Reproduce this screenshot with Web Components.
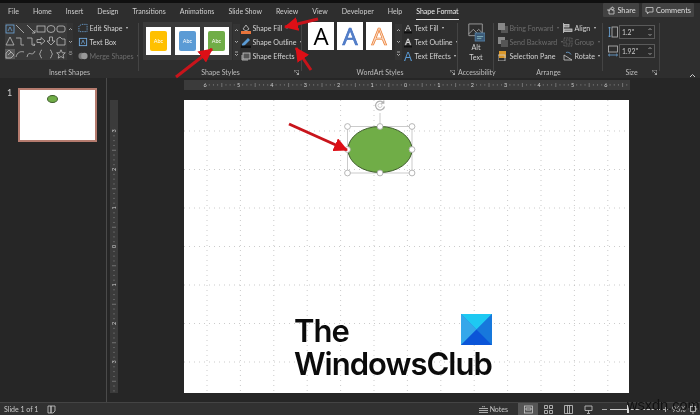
<!DOCTYPE html>
<html><head><meta charset="utf-8"><style>
html,body{margin:0;padding:0;background:#262626;width:700px;height:415px;overflow:hidden;font-family:Lato,"Liberation Sans",sans-serif}
svg{display:block}
</style></head><body>
<pp-app>
  <pp-tabs slot="tabs">
    <pp-tab>File</pp-tab><pp-tab>Home</pp-tab><pp-tab>Insert</pp-tab><pp-tab>Design</pp-tab><pp-tab>Transitions</pp-tab><pp-tab>Animations</pp-tab><pp-tab>Slide Show</pp-tab><pp-tab>Review</pp-tab><pp-tab>View</pp-tab><pp-tab>Developer</pp-tab><pp-tab>Help</pp-tab><pp-tab active>Shape Format</pp-tab>
    <pp-btn slot="right" style="width:36px"><svg width="9" height="9" viewBox="0 0 9 9" fill="none" stroke="#ccc" stroke-width=".8"><path d="M1 4h2v4h5V4H6M3 5c0-2 1-3 3-3V.8L8.3 2.5 6 4.2V3C4.5 3 3.6 3.8 3 5z"/></svg>Share</pp-btn>
    <pp-btn slot="right" style="width:52px"><svg width="9" height="9" viewBox="0 0 9 9" fill="none" stroke="#ccc" stroke-width=".8"><path d="M1 1.5h7v4.5H4L2.5 7.8V6H1z"/></svg>Comments</pp-btn>
  </pp-tabs>
  <pp-ribbon slot="ribbon">
    <rb-group label="Insert Shapes" style="--w:139px;--pl:5px">
      <shape-gallery></shape-gallery>
      <rb-col style="margin-left:5px">
        <rb-cmd><svg slot="i" width="11" height="10" viewBox="0 0 11 10" fill="none" stroke="#6fa8dc" stroke-width=".9" stroke-dasharray="1.5 1"><path d="M1 9V3l3-2h6v8z"/></svg>Edit Shape<rb-caret></rb-caret></rb-cmd>
        <rb-cmd><svg slot="i" width="11" height="10" viewBox="0 0 11 10" fill="none" stroke="#6fa8dc"><rect x="1.5" y="1" width="8" height="8"/><path d="M3.7 7 5.5 3l1.8 4" stroke-width=".8"/></svg>Text Box</rb-cmd>
        <rb-cmd disabled><svg slot="i" width="11" height="10" viewBox="0 0 11 10" fill="#777"><circle cx="4" cy="5" r="3.5"/><circle cx="7" cy="5" r="3.5" fill="#999"/></svg>Merge Shapes<rb-caret></rb-caret></rb-cmd>
      </rb-col>
    </rb-group>
    <rb-group label="Shape Styles" launcher style="--w:163px;--pl:4px">
      <rb-gallery>
        <rb-tile style="margin-right:4px"><style-swatch style="--c:#FFC000"></style-swatch></rb-tile>
        <rb-tile style="margin-right:4px"><style-swatch style="--c:#5B9BD5"></style-swatch></rb-tile>
        <rb-tile><style-swatch style="--c:#70AD47"></style-swatch></rb-tile>
      </rb-gallery>
      <rb-scroll style="margin-left:1px"></rb-scroll>
      <rb-col style="margin-left:1px">
        <rb-cmd><svg slot="i" width="10" height="11" viewBox="0 0 10 11"><path d="M2 6 5 2l3 4-3 2z" fill="none" stroke="#ccc" stroke-width=".8"/><rect x="0" y="8" width="10" height="3" fill="#e8743b"/></svg>Shape Fill<rb-caret></rb-caret></rb-cmd>
        <rb-cmd><svg slot="i" width="10" height="11" viewBox="0 0 10 11"><path d="M1 7 7 1l2 2-6 6H1z" fill="#5b9bd5"/><rect x="0" y="8.5" width="10" height="2.5" fill="#111"/></svg>Shape Outline<rb-caret></rb-caret></rb-cmd>
        <rb-cmd><svg slot="i" width="10" height="11" viewBox="0 0 10 11" fill="none" stroke="#ccc" stroke-width=".8"><rect x="2" y="2" width="7" height="6" fill="#555"/><path d="M1 4v5h6"/></svg>Shape Effects<rb-caret></rb-caret></rb-cmd>
      </rb-col>
    </rb-group>
    <rb-group label="WordArt Styles" launcher style="--w:156px;--pl:6px">
      <rb-tile style="--tw:26px;margin-right:3px"><art-a style="--f:#000;--s:transparent">A</art-a></rb-tile>
      <rb-tile style="--tw:26px;margin-right:3px"><art-a style="--f:#5580c8;--s:#4472C4">A</art-a></rb-tile>
      <rb-tile style="--tw:26px"><art-a style="--f:#f8dcc8;--s:#ED7D31">A</art-a></rb-tile>
      <rb-scroll style="margin-left:3px"></rb-scroll>
      <rb-col style="margin-left:1px">
        <rb-cmd><svg slot="i" width="10" height="11" viewBox="0 0 10 11"><text x="5" y="7.5" font-size="9" text-anchor="middle" fill="#ddd" font-family="Liberation Sans">A</text><rect x="1" y="8.5" width="8" height="2" fill="#111"/></svg>Text Fill<rb-caret></rb-caret></rb-cmd>
        <rb-cmd><svg slot="i" width="10" height="11" viewBox="0 0 10 11"><text x="5" y="7.5" font-size="9" text-anchor="middle" fill="none" stroke="#ddd" stroke-width=".5" font-family="Liberation Sans">A</text><rect x="1" y="8.5" width="8" height="2" fill="#111"/></svg>Text Outline<rb-caret></rb-caret></rb-cmd>
        <rb-cmd><svg slot="i" width="10" height="11" viewBox="0 0 10 11"><text x="5" y="9.5" font-size="12" text-anchor="middle" fill="#5b9bd5" font-family="Liberation Sans">A</text></svg>Text Effects<rb-caret></rb-caret></rb-cmd>
      </rb-col>
    </rb-group>
    <rb-group label="Accessibility" style="--w:36px;--pl:0px">
      <alt-text>Alt<br>Text</alt-text>
    </rb-group>
    <rb-group label="Arrange" style="--w:109px;--pl:4px">
      <rb-col style="width:65px">
        <rb-cmd disabled><svg slot="i" width="10" height="10" viewBox="0 0 10 10"><rect x="3" y="3" width="7" height="7" fill="#555"/><rect width="7" height="7" fill="#888"/></svg>Bring Forward<rb-caret></rb-caret></rb-cmd>
        <rb-cmd disabled><svg slot="i" width="10" height="10" viewBox="0 0 10 10"><rect width="7" height="7" fill="#888"/><rect x="3" y="3" width="7" height="7" fill="#555"/></svg>Send Backward<rb-caret></rb-caret></rb-cmd>
        <rb-cmd><svg slot="i" width="10" height="10" viewBox="0 0 10 10"><rect x="1" y="0" width="7" height="7" fill="#d9972b"/><rect x="0" y="4" width="7" height="6" fill="none" stroke="#ccc" stroke-width=".8"/></svg>Selection Pane</rb-cmd>
      </rb-col>
      <rb-col>
        <rb-cmd><svg slot="i" width="10" height="10" viewBox="0 0 10 10" fill="none" stroke="#ccc" stroke-width=".8"><path d="M.5 0v10"/><rect x="1" y="1.5" width="5" height="2.5" fill="#888"/><rect x="1" y="6" width="8" height="2.5" fill="#888"/></svg>Align<rb-caret></rb-caret></rb-cmd>
        <rb-cmd disabled><svg slot="i" width="10" height="10" viewBox="0 0 10 10" fill="none" stroke="#777" stroke-width=".8" stroke-dasharray="1 .6"><rect x="1" y="1" width="8" height="8"/><rect x="3" y="3" width="4" height="4"/></svg>Group<rb-caret></rb-caret></rb-cmd>
        <rb-cmd><svg slot="i" width="10" height="10" viewBox="0 0 10 10" fill="none" stroke="#ccc" stroke-width=".8"><path d="M1 9h8L1 4z"/><path d="M3 1.5C5 .8 7 1.5 8 3.5" stroke="#6fa8dc"/></svg>Rotate<rb-caret></rb-caret></rb-cmd>
      </rb-col>
    </rb-group>
    <rb-group label="Size" launcher style="--w:57px;--pl:5px">
      <rb-col style="gap:5px;padding-top:4px">
        <size-field value="1.2&quot;"><svg slot="i" width="10" height="12" viewBox="0 0 10 12" fill="none" stroke="#bbb" stroke-width=".8"><rect x="4" y="1" width="5.5" height="10"/><path d="M1.5 1v10" stroke="#6fa8dc"/><path d="M.3 2.3 1.5 1l1.2 1.3M.3 9.7 1.5 11l1.2-1.3" stroke="#6fa8dc"/></svg></size-field>
        <size-field value="1.92&quot;"><svg slot="i" width="10" height="12" viewBox="0 0 10 12" fill="none" stroke="#bbb" stroke-width=".8"><rect x=".5" y="1" width="9" height="6"/><path d="M.5 10h9" stroke="#6fa8dc"/><path d="M1.8 8.8.5 10l1.3 1.2M8.2 8.8 9.5 10l-1.3 1.2" stroke="#6fa8dc"/></svg></size-field>
      </rb-col>
    </rb-group>
    <rb-collapse></rb-collapse>
  </pp-ribbon>
  <pp-thumbs slot="thumbs"></pp-thumbs>
  <pp-work slot="work">
    <pp-hruler slot="hr"></pp-hruler>
    <pp-vruler slot="vr"></pp-vruler>
    <pp-slide slot="slide"></pp-slide>
  </pp-work>
  <pp-status slot="status"></pp-status>
  <red-arrows slot="over"></red-arrows>
</pp-app>
<script>
function el(name,css,html,init){
  customElements.define(name,class extends HTMLElement{
    constructor(){super();this.attachShadow({mode:'open'}).innerHTML='<style>'+css+'</style>'+(typeof html==='function'?html(this):html);}
    connectedCallback(){if(init)init(this);}
  });
}
el('pp-app',`:host{display:block;position:relative;width:700px;height:415px;overflow:hidden;background:#262626;color:#d2d2d2;font:7px Lato,"Liberation Sans",sans-serif;filter:blur(.25px)}
.m{display:grid;grid-template-columns:107px 593px;height:324px}
`,`<slot name="tabs"></slot><slot name="ribbon"></slot><div class="m"><slot name="thumbs"></slot><slot name="work"></slot></div><slot name="status"></slot><slot name="over"></slot>`);
el('pp-tabs',`:host{display:flex;height:20px;box-sizing:border-box;border-top:3px solid #101010;background:#2e2e2e;align-items:center;padding-left:8px}
.l{display:flex;gap:14px;flex:1;height:100%;align-items:center}.r{display:flex;gap:3px;margin-right:6px;margin-top:-3px}`,
`<div class="l"><slot></slot></div><div class="r"><slot name="right"></slot></div>`);
el('pp-tab',`:host{display:block;font-size:7px;line-height:17px;height:17px;color:#cfcfcf;position:relative;white-space:nowrap}
:host([active]){color:#eee}
:host([active])::after{content:"";position:absolute;left:0;right:0;bottom:0;height:1.5px;background:#e8e8e8}`,`<slot></slot>`);
el('pp-btn',`:host{display:flex;align-items:center;justify-content:center;gap:2px;height:14px;background:#424242;font-size:7.4px;color:#ddd;border-radius:1px;white-space:nowrap}`,`<slot></slot>`);
el('pp-ribbon',`:host{display:flex;height:58px;background:#2e2e2e;position:relative}`,`<slot></slot>`);
el('rb-group',`:host{display:flex;flex-direction:column;width:var(--w);height:58px;box-sizing:border-box;position:relative}
.c{display:flex;height:47px;padding-left:var(--pl);align-items:flex-start;padding-top:2px;box-sizing:border-box}
.l{height:11px;line-height:10px;text-align:center;font-size:7px;color:#bdbdbd;white-space:nowrap}
.s{position:absolute;right:0;top:3px;height:48px;width:1px;background:#444}
.k{position:absolute;right:3px;bottom:3px;width:5px;height:5px}`,
h=>`<div class="c"><slot></slot></div><div class="l">${h.getAttribute('label')}</div><div class="s"></div>`+(h.hasAttribute('launcher')?`<svg class="k" viewBox="0 0 5 5" fill="none" stroke="#bbb" stroke-width=".7"><path d="M0 2.5V0h5v5H2.5M1.5 1.5l3 3M3 4.5h1.5V3"/></svg>`:''));
el('rb-col',`:host{display:flex;flex-direction:column;gap:0;margin-top:-1px}`,`<slot></slot>`);
el('rb-cmd',`:host{display:flex;align-items:center;gap:1.5px;height:14px;font-size:7.1px;white-space:nowrap;color:#d2d2d2}
:host([disabled]){color:#6d6d6d}
.i{display:flex;width:10px;justify-content:center}`,`<span class="i"><slot name="i"></slot></span><slot></slot>`);
el('rb-caret',`:host{display:inline-block;margin-left:2px;width:0;height:0;border:1.5px solid transparent;border-top:2px solid currentColor;border-bottom:0}`,``);
el('shape-gallery',`:host{display:flex;width:68px;height:37px;background:#3a3a3a;margin-top:1px}
.g{display:grid;grid-template-columns:repeat(6,10.3px);grid-auto-rows:12.3px;width:62px}
.g svg{width:10px;height:10px;margin:1px 0 0 0;fill:none;stroke:#bdbdbd;stroke-width:.8}
.v{width:6px;background:#333;display:flex;flex-direction:column;align-items:center;justify-content:space-around;color:#bbb}
.v svg{width:5px;height:5px;fill:none;stroke:#bbb;stroke-width:.8}`,
`<div class="g">
<svg viewBox="0 0 10 10" style="stroke:#6fa8dc"><rect x="1" y="1" width="8" height="8"/><path d="M3 7l2-4 2 4" stroke-width=".7"/></svg>
<svg viewBox="0 0 10 10"><path d="M1 1l8 8"/></svg>
<svg viewBox="0 0 10 10"><path d="M1 1l8 8M9 6v3H6"/></svg>
<svg viewBox="0 0 10 10"><rect x="1" y="2" width="8" height="6"/></svg>
<svg viewBox="0 0 10 10"><ellipse cx="5" cy="5" rx="4" ry="3.5"/></svg>
<svg viewBox="0 0 10 10"><rect x="1" y="2" width="8" height="6" rx="2"/></svg>
<svg viewBox="0 0 10 10"><path d="M5 1l4 8H1z"/></svg>
<svg viewBox="0 0 10 10"><path d="M1 2h5v7h3"/></svg>
<svg viewBox="0 0 10 10"><path d="M1 2h5v7h3M8 7.500 9 9 7.500 9.500"/></svg>
<svg viewBox="0 0 10 10"><path d="M1 3.500h4V1.500L9 5 5 8.500V6.500H1z"/></svg>
<svg viewBox="0 0 10 10"><path d="M3.500 1h3v4H9L5 9 1 5h2.500z"/></svg>
<svg viewBox="0 0 10 10"><path d="M1 9V3l3-2 2 2h3v6z"/></svg>
<svg viewBox="0 0 10 10" style="background:#5a5a5a"><path d="M1 9V4l3-3 2 2 3 3-3 3zM3 6l3-3"/></svg>
<svg viewBox="0 0 10 10"><path d="M1 8C2 3 6 2 9 3"/></svg>
<svg viewBox="0 0 10 10"><path d="M1 8C3 0 6 9 9 2"/></svg>
<svg viewBox="0 0 10 10"><path d="M6 1C4 1 5 4 3.500 5 5 6 4 9 6 9"/></svg>
<svg viewBox="0 0 10 10"><path d="M4 1C6 1 5 4 6.500 5 5 6 6 9 4 9"/></svg>
<svg viewBox="0 0 10 10"><path d="M5 .8l1.300 3h3L7 6l.8 3.200L5 7.500 2.200 9.200 3 6 .7 3.800h3z"/></svg>
</div><div class="v"><svg viewBox="0 0 5 5"><path d="M1 3l1.500-1.500L4 3"/></svg><svg viewBox="0 0 5 5"><path d="M1 2l1.500 1.500L4 2"/></svg><svg viewBox="0 0 5 5"><path d="M1 1h3M1 2.500l1.500 1.500L4 2.500"/></svg></div>`);
el('rb-gallery',`:host{display:flex;background:#3a3a3a;width:89px;height:38px;box-sizing:border-box;padding:5px 3px;margin-top:0}`,`<slot></slot>`);
el('rb-tile',`:host{display:flex;flex:none;width:var(--tw,25px);height:28px;background:#fff;align-items:center;justify-content:center;box-sizing:border-box;margin-top:var(--tm,0)}`,`<slot></slot>`);
el('style-swatch',`:host{display:flex;width:17px;height:20px;background:var(--c);border-radius:2px;align-items:center;justify-content:center;color:#fff;font-size:5.5px}`,`Abc`);
el('art-a',`:host{display:block;font:400 24px/28px "Open Sans","Liberation Sans",sans-serif;color:var(--f);-webkit-text-stroke:.7px var(--s)}`,`<slot></slot>`);
el('rb-scroll',`:host{display:flex;flex-direction:column;width:7px;height:36px;margin-top:2px;justify-content:space-between;background:#343434}
svg{width:7px;height:12px;fill:none;stroke:#c8c8c8;stroke-width:.8}`,
`<svg viewBox="0 0 7 12"><path d="M2 7l1.500-1.500L5 7"/></svg><svg viewBox="0 0 7 12"><path d="M2 5l1.500 1.500L5 5"/></svg><svg viewBox="0 0 7 12"><path d="M2 4h3M2 6l1.500 1.500L5 6"/></svg>`);
el('alt-text',`:host{display:flex;flex-direction:column;align-items:center;width:36px;font-size:7.2px;line-height:9.500px;text-align:center;color:#d2d2d2}
svg{margin:1px 0 1px;width:18px;height:19px}`,
`<svg viewBox="0 0 20 21" fill="none" stroke="#bdbdbd" stroke-width=".8"><path d="M2 1h15v13H2z"/><path d="M2 12l5-5 5 5M11 9l2-2 4 4"/><rect x="9" y="11" width="11" height="9" fill="#3b5a78" stroke="#5b8ab0"/><path d="M11 15h7M11 17h5" stroke="#9cc"/></svg><div><slot></slot></div>`);
el('size-field',`:host{display:flex;align-items:center;gap:1px;height:14px}
.b{position:relative;width:36px;height:14px;border:1px solid #5a5a5a;box-sizing:border-box;background:#2b2b2b;font-size:6.8px;line-height:12px;padding-left:2px;color:#ccc}
svg{position:absolute;right:1px;top:1px;width:6px;height:10px;fill:none;stroke:#bbb;stroke-width:.8}`,
h=>`<slot name="i"></slot><div class="b">${h.getAttribute('value')}<svg viewBox="0 0 6 10"><path d="M1.500 3l1.500-1.500L4.500 3M1.500 7l1.500 1.500L4.500 7"/></svg></div>`);
el('rb-collapse',`:host{display:block;margin:51px 0 0 29px;width:7px;height:5px}svg{width:7px;height:5px;fill:none;stroke:#ccc}`,`<svg viewBox="0 0 7 5"><path d="M1 4l2.500-2.500L6 4"/></svg>`);
el('pp-thumbs',`:host{display:block;position:relative;box-sizing:border-box;padding:10px 0 0 7px;border-right:1px solid #4a4a4a;background:#262626}
.w{display:flex;gap:6px;align-items:flex-start;font-size:9px;color:#cfcfcf;line-height:9px}
.t{width:79px;height:54px;border:2px solid #b57b6e;box-sizing:border-box;background:#fff;display:flex;justify-content:center;padding-top:5px}
.e{width:11px;height:8px;margin-right:10px;border-radius:50%;background:#70AD47;border:.5px solid #3d5c2a;box-sizing:border-box}`,
`<div class="w"><span>1</span><div class="t"><div class="e"></div></div></div>`);
el('pp-work',`:host{display:grid;grid-template-columns:76px 446px;grid-template-rows:10px 293px;row-gap:10px;padding:2px 0 0 1px;box-sizing:border-box}
::slotted([slot=hr]){grid-column:2;grid-row:1}
::slotted([slot=vr]){grid-column:1;grid-row:2}
::slotted([slot=slide]){grid-column:2;grid-row:2}`,`<slot name="hr"></slot><slot name="vr"></slot><slot name="slide"></slot>`);
function hr(){let s='';for(let i=-6;i<=6;i++){const x=221.5+i*33.4;s+=`<text x="${x}" y="7" font-size="5.5" text-anchor="middle" fill="#cfcfcf" font-family="Lato">${Math.abs(i)||0}</text>`;
 for(let k=1;k<8;k++){const t=x+k*33.4/8;if(t>446)continue;s+=`<path d="M${t} ${k==4?3:4.200}v${k==4?4:1.400}" stroke="#aaa" stroke-width=".5"/>`;}}
 return s;}
el('pp-hruler',`:host{display:block;background:#3b3b3b;width:446px;height:10px}svg{width:446px;height:10px}`,`<svg viewBox="0 0 446 10">${hr()}</svg>`);
function vr(){let s='';for(let i=-3;i<=3;i++){const y=146.5+i*38.5;s+=`<text x="4" y="${y+2}" font-size="5.5" text-anchor="middle" fill="#cfcfcf" font-family="Lato" transform="rotate(-90 4 ${y})">${Math.abs(i)}</text>`;
 for(let k=1;k<8;k++){const t=y+k*38.5/8;if(t>293)continue;s+=`<path d="M${k==4?2:3.300} ${t}h${k==4?4:1.400}" stroke="#aaa" stroke-width=".5"/>`;}}
 return s;}
el('pp-vruler',`:host{display:block;background:#3b3b3b;width:8px;height:293px;margin-left:2px}svg{width:8px;height:293px}`,`<svg viewBox="0 0 8 293">${vr()}</svg>`);
function grid(){let s='';for(let x=23;x<445;x+=33.4)s+=`<path d="M${x} 0V293"/>`;for(let y=31;y<293;y+=38.5)s+=`<path d="M0 ${y}H445"/>`;return s;}
el('pp-slide',`:host{display:block;position:relative;background:#fff;width:445px;height:293px;overflow:hidden}
svg.g{position:absolute;left:0;top:0;width:445px;height:293px}
.lg{position:absolute;left:110px;top:214px;color:#0b0b0b;font:600 31px/33px Inter,"Open Sans",sans-serif;letter-spacing:-1px;white-space:nowrap}
svg.w{position:absolute;left:277px;top:214px;width:31px;height:31px}`,
`<svg class="g" viewBox="0 0 445 293" fill="none" stroke="#b4b4b4" stroke-width=".7" stroke-dasharray="1 4">${grid()}</svg>
<svg class="g" viewBox="0 0 445 293">
<rect x="163.500" y="26.500" width="64.500" height="46.500" fill="none" stroke="#b5b5b5" stroke-width=".7"/>
<path d="M196 26V13" stroke="#b5b5b5" stroke-width=".7"/>
<ellipse cx="196" cy="49.500" rx="32" ry="23" fill="#70AD47" stroke="#3f5d2c" stroke-width="1"/>
<g fill="#fff" stroke="#a5a5a5" stroke-width=".8"><circle cx="163.500" cy="26.500" r="2.900"/><circle cx="196" cy="26.500" r="2.900"/><circle cx="228" cy="26.500" r="2.900"/><circle cx="163.500" cy="49.500" r="2.900"/><circle cx="228" cy="49.500" r="2.900"/><circle cx="163.500" cy="73" r="2.900"/><circle cx="196" cy="73" r="2.900"/><circle cx="228" cy="73" r="2.900"/></g>
<path d="M199.500 2.600A4.500 4.500 0 1 0 200.500 6.500M199.800 .5V3.200H197" fill="none" stroke="#b0b0b0" stroke-width="1.200"/>
<circle cx="196" cy="5.500" r="2" fill="none" stroke="#c5c5c5" stroke-width=".8"/>
</svg>
<div class="lg">The<br>WindowsClub</div>
<svg class="w" viewBox="0 0 31 31"><rect width="31" height="31" fill="#1a84e2"/><path d="M0 0H31L15.500 15.500z" fill="#1ec9f2"/><path d="M0 0V31L15.500 15.500z" fill="#35a7ea"/><path d="M31 0V31L15.500 15.500z" fill="#1778dc"/><path d="M0 31H31L15.500 15.500z" fill="#0b55d8"/></svg>`);
el('pp-status',`:host{display:flex;align-items:center;position:relative;height:13px;box-sizing:border-box;background:#313131;border-top:1px solid #444;font-size:7px;color:#c8c8c8;padding-left:4px;white-space:nowrap}
.n{display:flex;align-items:center;gap:2px;margin-left:auto}
.v{display:flex;align-items:center;margin-left:10px}
.b{width:20px;height:12px;display:flex;align-items:center;justify-content:center}.b.a{background:#555}
svg{fill:none;stroke:#ccc;stroke-width:.8}
.sl{position:relative;width:50px;height:1px;background:#ccc;margin:0 3px}
.th{position:absolute;left:17px;top:-3.500px;width:2px;height:8px;background:#ddd}
.r{display:flex;align-items:center}`,
`<span>Slide 1 of 1</span><svg width="9" height="9" viewBox="0 0 9 9" style="margin-left:9px"><path d="M1 1h3v7H1zM4 1h4v5L6 8H4z"/></svg>
<div class="n"><svg width="9" height="7" viewBox="0 0 9 7"><path d="M0 2.500h9M0 4.500h9M0 6.500h9M3 1l1.500-1L6 1"/></svg>Notes</div>
<div class="v"><div class="b a"><svg width="9" height="9" viewBox="0 0 9 9"><rect x=".5" y="1" width="8" height="7"/><path d="M2 3h5v2H2z"/></svg></div>
<div class="b"><svg width="9" height="9" viewBox="0 0 9 9"><path d="M.5 .5h3v3h-3zM5.500 .5h3v3h-3zM.5 5.500h3v3h-3zM5.500 5.500h3v3h-3z"/></svg></div>
<div class="b"><svg width="9" height="9" viewBox="0 0 9 9"><path d="M.5 .5h8v8h-8zM3.500 .5v8M5.500 .5v8"/></svg></div>
<div class="b"><svg width="9" height="9" viewBox="0 0 9 9"><path d="M1 1h7v4.500H1zM4.500 5.500V8M3 8.500h3"/></svg></div></div>
<div class="r" style="margin-left:4px"><svg width="5" height="3" viewBox="0 0 5 3"><path d="M0 1.500h5"/></svg><div class="sl"><div class="th"></div></div><svg width="5" height="5" viewBox="0 0 5 5"><path d="M0 2.500h5M2.500 0v5"/></svg>
<span style="margin-left:4px;width:14px">96%</span><svg width="10" height="10" viewBox="0 0 10 10" style="margin:0 2px 0 2px"><rect x="2.500" y="2.500" width="5" height="5"/><path d="M5 0v2M5 8v2M0 5h2M8 5h2"/></svg></div>`);
el('red-arrows',`:host{position:absolute;inset:0;display:block;pointer-events:none}
svg{position:absolute;left:0;top:0;width:700px;height:415px}
.wm{position:absolute;left:627px;top:396px;font:14.500px/18px "Liberation Sans",sans-serif;color:#111}`,
`<svg viewBox="0 0 700 415"><defs><marker id="h" markerUnits="userSpaceOnUse" markerWidth="15" markerHeight="14" refX="13" refY="7" orient="auto"><path d="M0 0 14 7 0 14z" fill="#dd0f16"/></marker></defs>
<g stroke="#c8141b" stroke-width="3" fill="none">
<path d="M176 77 212 49" marker-end="url(#h)"/><path d="M318 19 285 27" marker-end="url(#h)"/><path d="M311 70 296 48" marker-end="url(#h)"/><path d="M289 124 347 150" marker-end="url(#h)"/></g></svg><div class="wm">wsxdn.com</div>`);
</script>
</body></html>
